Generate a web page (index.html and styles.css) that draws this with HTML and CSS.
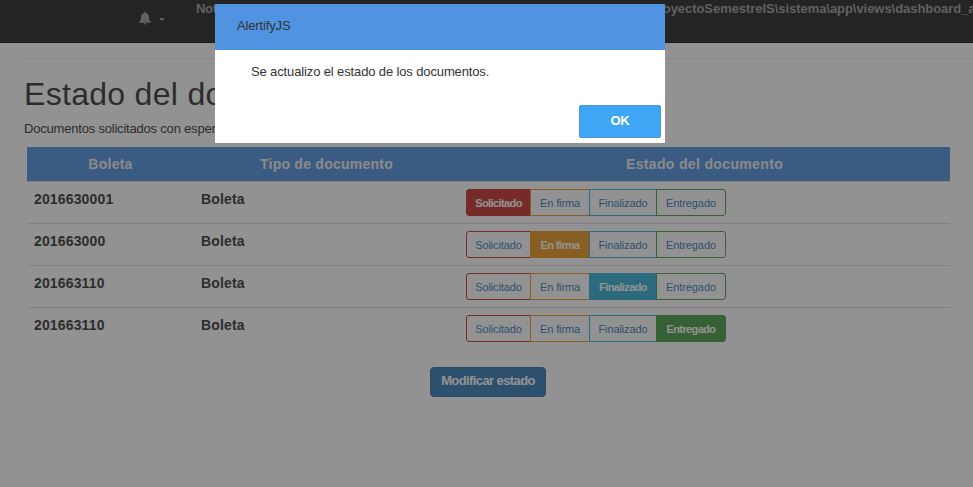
FILE: index.html
```html
<!DOCTYPE html>
<html lang="es">
<head>
<meta charset="utf-8">
<title>Estado del documento</title>
<link rel="stylesheet" href="styles.css">
</head>
<body>
<nav class="navbar">
  <div class="bell">
    <svg width="12" height="13" viewBox="0 0 12 13"><path d="M5.200 .9a.8.8 0 0 1 1.600 0C8.900 1.300 9.800 2.800 9.900 4.600C10 7.300 10.300 8.500 12 9.900V10.700H0V9.900C1.700 8.500 2 7.300 2.100 4.600C2.200 2.800 3.100 1.300 5.200 .9zM4.500 11.200h3a1.500 1.300 0 0 1-3 0z" fill="currentColor"/></svg>
    <span class="caret"></span>
  </div>
  <div class="notice"><span class="notice-start">Notice: Trying to get property of non-object in C:\xampp\htdocs\Proyectos\IS\</span>ProyectoSemestreIS\sistema\app\views\dashboard_a</div>
</nav>
<main class="page">
  <hr>
  <h1>Estado del documento</h1>
  <p class="lead">Documentos solicitados con espera</p>
  <table>
    <thead><tr><th class="c1">Boleta</th><th class="c2">Tipo de documento</th><th class="c3">Estado del documento</th></tr></thead>
    <tbody>
      <tr><td>2016630001</td><td>Boleta</td><td><div class="group"><span class="b red on">Solicitado</span><span class="b orange">En firma</span><span class="b cyan">Finalizado</span><span class="b green">Entregado</span></div></td></tr>
      <tr><td>201663000</td><td>Boleta</td><td><div class="group"><span class="b red">Solicitado</span><span class="b orange on">En firma</span><span class="b cyan">Finalizado</span><span class="b green">Entregado</span></div></td></tr>
      <tr><td>201663110</td><td>Boleta</td><td><div class="group"><span class="b red">Solicitado</span><span class="b orange">En firma</span><span class="b cyan on">Finalizado</span><span class="b green">Entregado</span></div></td></tr>
      <tr><td>201663110</td><td>Boleta</td><td><div class="group"><span class="b red">Solicitado</span><span class="b orange">En firma</span><span class="b cyan">Finalizado</span><span class="b green on">Entregado</span></div></td></tr>
    </tbody>
  </table>
  <button class="primary">Modificar estado</button>
</main>
<div class="dimmer"></div>
<div class="dialog" role="dialog">
  <div class="dialog-head"><span>AlertifyJS</span></div>
  <div class="dialog-body"><span>Se actualizo el estado de los documentos.</span></div>
  <div class="dialog-foot"><button class="ok">OK</button></div>
</div>
</body>
</html>
```
FILE: styles.css
```css
* { box-sizing: border-box; }
html, body { height: 100%; }
body {
  margin: 0;
  overflow: hidden;
  background: #fff;
  color: #333;
  font: 13px/18px "Liberation Sans", Arial, sans-serif;
  letter-spacing: -0.13px;
}

.navbar {
  height: 43px;
  display: flex;
  background: #222;
  border-bottom: 1px solid #080808;
  color: #9d9d9d;
  overflow: hidden;
}
.bell { display: flex; flex: none; align-items: flex-start; width: 196px; padding: 12px 0 0 139px; }
.bell svg { flex: none; }
.caret {
  margin: 6px 0 0 8px;
  border-top: 3px solid currentColor;
  border-left: 3px solid transparent;
  border-right: 3px solid transparent;
}
.notice { white-space: nowrap; font-weight: bold; letter-spacing: -0.05px; }
.notice-start { letter-spacing: -0.325px; }

.page { padding: 15px 23px 0 24px; }
hr { margin: 0 -23px 0 0; border: 0; border-top: 1px solid #eee; }
h1 { margin: 16px 0 0; font-size: 32px; line-height: 38px; font-weight: normal; letter-spacing: 0.3px; }
.lead { margin: 7px 0 0; height: 27px; letter-spacing: -0.2px; }

table { width: 923px; margin-left: 3px; border-collapse: separate; border-spacing: 0; table-layout: fixed; }
th {
  height: 34px;
  padding: 0;
  background: #4f93e1;
  color: #eee;
  font-size: 14px;
  letter-spacing: 0.25px;
}
.c1 { width: 167px; }
.c2 { width: 265px; }
.c3 { letter-spacing: 0.35px; }
td {
  height: 42px;
  padding: 9px 7px 0;
  vertical-align: top;
  border-top: 1px solid #ddd;
  font-size: 14px;
  line-height: 17px;
  font-weight: bold;
  letter-spacing: 0.15px;
}
td:last-child { padding: 7px 7px 0; }

.group { display: flex; width: 260px; }
.b {
  flex: none;
  height: 27px;
  border: 1px solid;
  margin-left: -1px;
  color: #337ab7;
  font-size: 11px;
  line-height: 26px;
  font-weight: normal;
  letter-spacing: -0.1px;
  text-align: center;
}
.red { width: 65px; margin-left: 0; border-color: #c9302c; border-radius: 3px 0 0 3px; }
.orange { width: 60px; border-color: #ec971f; }
.cyan { width: 68px; border-color: #31b0d5; }
.green { width: 70px; border-color: #449d44; border-radius: 0 3px 3px 0; }
.on { color: #fff; font-weight: bold; letter-spacing: -0.6px; }
.red.on { background: #c9302c; }
.orange.on { background: #ec971f; }
.cyan.on { background: #31b0d5; }
.green.on { background: #449d44; }

.primary {
  display: block;
  width: 116px;
  height: 30px;
  margin: 18px 0 0 406px;
  padding: 0 0 3px;
  border: 1px solid #2e6da4;
  border-radius: 4px;
  background: #337ab7;
  color: #fff;
  font: bold 13px "Liberation Sans", Arial, sans-serif;
  letter-spacing: -0.6px;
}

.dimmer { position: fixed; inset: 0; background: #252525; opacity: 0.5; }
.dialog {
  position: fixed;
  left: 215px;
  top: 4px;
  width: 450px;
  height: 139px;
  display: flex;
  flex-direction: column;
  background: #fff;
}
.dialog-head { height: 46px; padding: 13px 22px; background: #4f93e1; letter-spacing: -0.15px; }
.dialog-body { flex: 1; padding: 13px 36px; }
.dialog-foot { display: flex; justify-content: flex-end; padding: 0 4px 5px; }
.ok {
  width: 82px;
  height: 33px;
  padding: 0 0 2px;
  border: 1px solid #4f93e1;
  border-radius: 2px;
  background: #3fa6f5;
  color: #fff;
  font: bold 13px "Liberation Sans", Arial, sans-serif;
  letter-spacing: -0.3px;
}
```
